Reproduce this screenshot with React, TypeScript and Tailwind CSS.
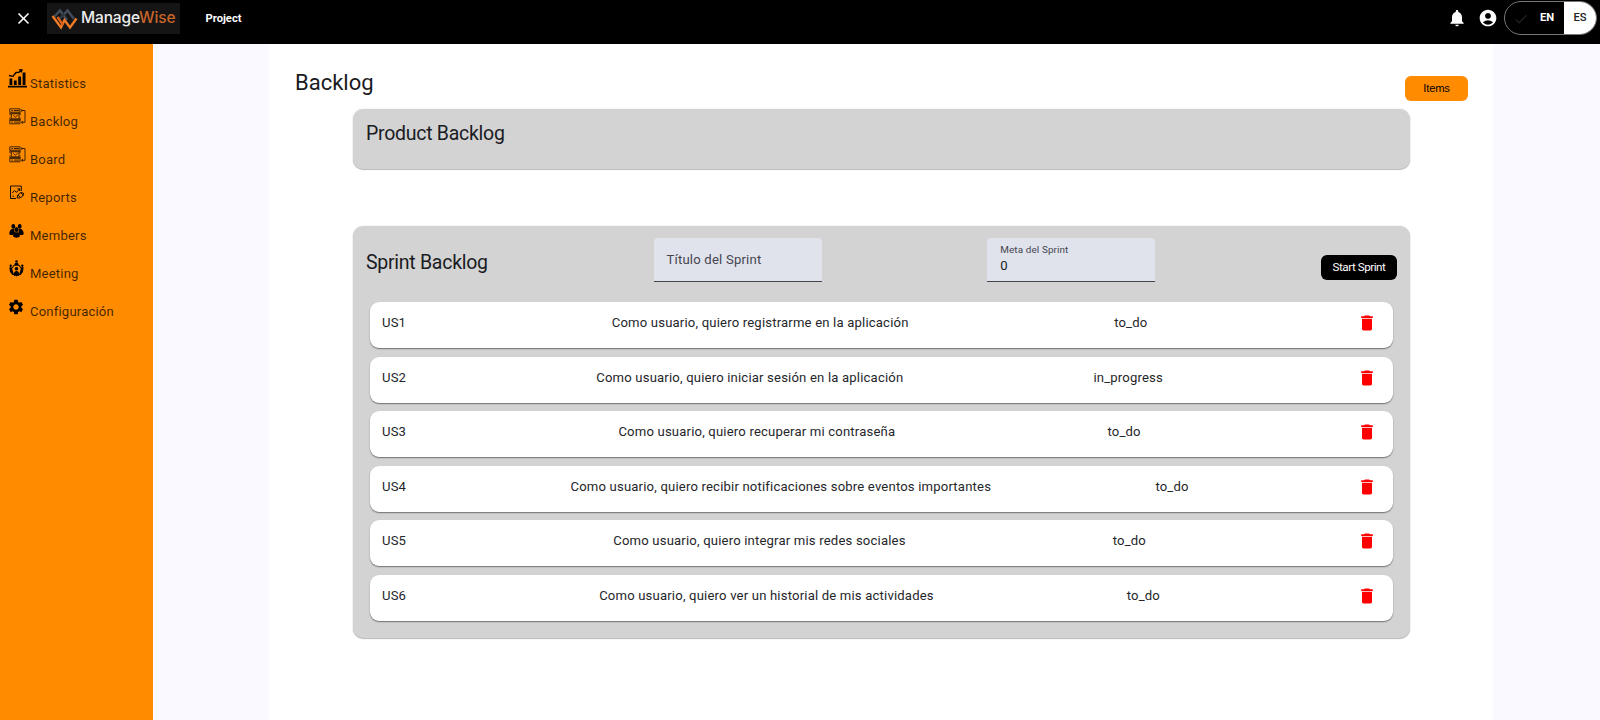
import React from "react";
import { MdNotifications, MdAccountCircle, MdDelete, MdSettings, MdCheck, MdClose } from "react-icons/md";

const StatisticsIcon = () => (
  <svg className="h-[19px] w-[19px]" viewBox="0 0 19 19" fill="currentColor">
    <path d="M0 16.800h19v1.800H0zM1.500 9.500h2.800V16H1.500zM5.900 11.500h2.800V16H5.900zM10.200 7.500h2.900V16h-2.900zM14.600 3.500h2.900V16h-2.900z" />
    <path d="M1 6.500 5 7.300 8 3.500 11 3.300 13.500 1" fill="none" stroke="currentColor" strokeWidth="1.300" />
    <path d="m10.500 .3 4.500-.1-1.500 3.800z" />
  </svg>
);

const BoardIcon = () => (
  <svg className="h-[17px] w-[17px] translate-x-[1px] opacity-75" viewBox="0 0 17 17" fill="none" stroke="currentColor" strokeWidth="1">
    <path d="M.8 .8h10.200v3.400H.8zM.8 12.400h10.200v3.400H.8zM2.300 5.800h7.700v5H2.300z" />
    <path d="M2.500 2.500h1.500M5 2.500h5M2.500 14.100h1.500M5 14.100h5M4.200 7.300l2 2 2.500-2M1 5.200h10.500M1 11.600h10.500M1 4.300v3M11 4.300v3M1 9.500v3M11 9.500v3" />
    <path d="M12.500 2.500H16v11.800h-3.500M14 13 12.300 14.300 14 15.600M12.800 1.200v2.600" />
  </svg>
);

const ReportIcon = () => (
  <svg className="h-[15px] w-[15px] translate-x-[1.500px]" viewBox="0 0 15 15" fill="none" stroke="currentColor" strokeWidth="0.900">
    <path d="M11.800 6V1H1v12.500h5.500M2.800 8 5 5.500l2 1.800 3.200-3.500M8 3.800h2.200V6M3 11.200h1.500" />
    <path d="M7.500 12.800 8.300 10l3.200-2.500 2.700.8-.7 2.500-3 2.200zM8.500 10l2.500 2.500M11.500 7.500l2 3" />
  </svg>
);

const MembersIcon = () => (
  <svg className="h-[15px] w-[15px] translate-x-[1px] translate-y-[0.500px]" viewBox="0 0 15 15" fill="currentColor">
    <ellipse cx="4.300" cy="2.900" rx="1.900" ry="2.300" />
    <ellipse cx="10.700" cy="2.900" rx="1.900" ry="2.300" />
    <ellipse cx="7.500" cy="6" rx="2" ry="2.500" />
    <path d="M2.800 5.500h2.500c-.4 1.500 0 2.700.9 3.500-1.500.5-2 1.300-2.300 2.500H1.500C.4 11.300.2 10.500.4 9.300.5 7.700 1.300 6.700 2.800 5.500zM12.200 5.500H9.700c.4 1.500 0 2.700-.9 3.500 1.500.5 2 1.300 2.300 2.500h2.400c1.100-.2 1.300-1 1.100-2.200-.1-1.600-.9-2.600-2.400-3.800zM5.700 8.800h3.600c1.300.8 1.700 2.200 1.500 4.200-1.500 1.500-5 1.500-6.600 0-.2-2 .2-3.400 1.500-4.200z" />
  </svg>
);

const MeetingIcon = () => (
  <svg className="h-[17px] w-[15px] translate-x-[1px]" viewBox="0 0 15 17" fill="currentColor">
    <circle cx="7.500" cy="1.500" r="1.300" />
    <path d="M6 3h3l1 2.800H5z" />
    <circle cx="1.700" cy="5.700" r="1.200" />
    <circle cx="13.300" cy="5.700" r="1.200" />
    <path d="M.4 7.300h2.300L3.800 11l1 3.500L3.500 15 1 12zM14.600 7.300h-2.300L11.200 11l-1 3.500 1.300.5L14 12z" />
    <circle cx="7.500" cy="8.800" r="1.800" />
    <path d="M4.700 14.500c0-2.300 1-3.500 2.800-3.500s2.800 1.200 2.800 3.500L7.500 16.500z" />
    <path d="M5 5 3 8.500M10 5l2 3.500M3 13.500l3 2.300M12 13.500l-3 2.300" stroke="currentColor" strokeWidth="1" />
  </svg>
);

const LogoMark = () => (
  <svg className="h-[22px] w-[27px]" viewBox="0 0 27 22" fill="none" strokeWidth="2.400">
    <path d="M3.500 8.500 9 2.500 16 12M12 7.500 16.500 2.500 23 11" stroke="#414b5b" />
    <path d="m13 5.500-4 5" stroke="#2f3745" />
    <path d="M1.500 8 10 19.500 13.500 12 19 19.500 25.500 10.500" stroke="#ee7a26" />
    <path d="m6.500 9 5.500 8" stroke="#d95f18" />
  </svg>
);

const navItems = [
  { label: "Statistics", icon: <StatisticsIcon /> },
  { label: "Backlog", icon: <BoardIcon /> },
  { label: "Board", icon: <BoardIcon /> },
  { label: "Reports", icon: <ReportIcon /> },
  { label: "Members", icon: <MembersIcon /> },
  { label: "Meeting", icon: <MeetingIcon /> },
  { label: "Configuración", icon: <MdSettings className="-ml-px h-[18px] w-[18px]" /> },
];

const stories = [
  { id: "US1", text: "Como usuario, quiero registrarme en la aplicación", status: "to_do" },
  { id: "US2", text: "Como usuario, quiero iniciar sesión en la aplicación", status: "in_progress" },
  { id: "US3", text: "Como usuario, quiero recuperar mi contraseña", status: "to_do" },
  { id: "US4", text: "Como usuario, quiero recibir notificaciones sobre eventos importantes", status: "to_do" },
  { id: "US5", text: "Como usuario, quiero integrar mis redes sociales", status: "to_do" },
  { id: "US6", text: "Como usuario, quiero ver un historial de mis actividades", status: "to_do" },
];

function Header() {
  return (
    <header className="flex h-[43.500px] shrink-0 items-start bg-black text-white">
      <MdClose className="mt-[9px] ml-[14px] h-[19px] w-[19px]" />
      <div className="mt-[3px] ml-[14px] flex h-[31px] w-[133px] items-center bg-[#151515] pl-[4px]">
        <LogoMark />
        <div className="mb-[2px] ml-[3px] font-[Inter] text-[15.500px] leading-none font-medium tracking-[-0.150px] whitespace-nowrap text-[#eeeeee]">
          Manage<span className="text-[#c8642a]">Wise</span>
        </div>
      </div>
      <div className="mt-[10.500px] ml-[25.500px] text-[11.200px] leading-4 font-bold">Project</div>
      <div className="ml-auto flex items-start">
        <MdNotifications className="mt-[8px] h-5 w-5" />
        <MdAccountCircle className="mt-[8px] ml-[11px] h-5 w-5" />
        <div className="mt-[1px] mr-[3px] ml-[6px] flex h-[34px] w-[93px] overflow-hidden rounded-full border border-[#77777c] text-[11.200px]">
          <div className="flex flex-1 items-center pt-px font-bold">
            <MdCheck className="ml-[8px] h-4 w-4 text-[#1d1f22]" />
            <span className="ml-[11px]">EN</span>
          </div>
          <div className="flex w-[32px] items-center justify-center bg-white pt-px font-medium text-[#222222]">ES</div>
        </div>
      </div>
    </header>
  );
}

function Sidebar() {
  return (
    <nav className="flex w-[153px] shrink-0 flex-col bg-[#ff8c00] pt-[20.500px] text-[13.100px] tracking-[0.180px] text-black/75">
      {navItems.map((item) => (
        <a key={item.label} className="flex h-[38px] items-start">
          <span className="flex h-[30px] w-[30px] items-center pb-[1px] pl-[8px] text-black">{item.icon}</span>
          <span className="mt-[10px] leading-5">{item.label}</span>
        </a>
      ))}
    </nav>
  );
}

const cardShadow = "shadow-[0_1px_1px_rgba(0,0,0,0.250),0_0_2px_rgba(0,0,0,0.120)]";

export default function App() {
  return (
    <div className="flex h-[720px] w-[1600px] flex-col overflow-hidden bg-[#faf9ff] font-[Roboto,sans-serif] text-[#1a1b1f]">
      <Header />
      <div className="flex flex-1">
        <Sidebar />
        <main className="ml-[116px] w-[1224px] bg-white">
          <div className="flex h-[65px] justify-between pr-[25px] pl-[26px]">
            <h1 className="mt-[25px] text-[22px] leading-7">Backlog</h1>
            <button className="mt-[32px] h-[25px] w-[63px] rounded-[6px] bg-[#ff8c00] font-['Liberation_Sans'] text-[11.200px] tracking-[-0.200px] text-black">
              Items
            </button>
          </div>
          <section className={`ml-[84px] h-[60px] w-[1057px] rounded-[10px] bg-[#d3d3d3] pt-[11px] pl-[13px] ${cardShadow}`}>
            <h2 className="text-[19.500px] leading-7 tracking-[-0.270px]">Product Backlog</h2>
          </section>
          <section className={`mt-[57px] ml-[84px] h-[412.500px] w-[1057px] rounded-[10px] bg-[#d3d3d3] px-[13px] pt-[12.500px] ${cardShadow}`}>
            <div className="flex items-start justify-between">
              <h2 className="mt-[11px] text-[19.500px] leading-7 tracking-[-0.270px]">Sprint Backlog</h2>
              <div className="flex h-[44px] w-[168px] items-center rounded-t-[4px] border-b border-[#44464f] bg-[#e0e2ec] pt-px pl-[13px] text-[13.100px] tracking-[0.200px] text-[#44464f]">
                Título del Sprint
              </div>
              <div className="h-[44px] w-[168px] rounded-t-[4px] border-b border-[#44464f] bg-[#e0e2ec] pt-[4.500px] pl-[13px] text-[#44464f]">
                <div className="text-[9.900px] leading-[13px] tracking-[0.120px]">Meta del Sprint</div>
                <div className="mt-[1px] text-[13.100px] leading-[17px] text-[#1a1b1f]">0</div>
              </div>
              <button className="mt-[17px] h-[25px] w-[76px] rounded-[6px] bg-black text-[11.600px] tracking-[-0.450px] text-white">
                Start Sprint
              </button>
            </div>
            <div className="mt-[20px] flex flex-col gap-[8.500px] px-[4px]">
              {stories.map((s) => (
                <div
                  key={s.id}
                  className="flex h-[46px] justify-between rounded-[9px] bg-white pt-[11px] pr-[12px] pl-[12px] text-[13.100px] leading-5 tracking-[0.180px] text-[#25262a] shadow-[0_1px_1px_rgba(0,0,0,0.350),0_1px_2px_rgba(0,0,0,0.150)]"
                >
                  <span>{s.id}</span>
                  <span>{s.text}</span>
                  <span>{s.status}</span>
                  <button className="flex h-5 w-[28px] items-center justify-center text-[#ff0000]">
                    <MdDelete className="h-5 w-5" />
                  </button>
                </div>
              ))}
            </div>
          </section>
        </main>
      </div>
    </div>
  );
}
